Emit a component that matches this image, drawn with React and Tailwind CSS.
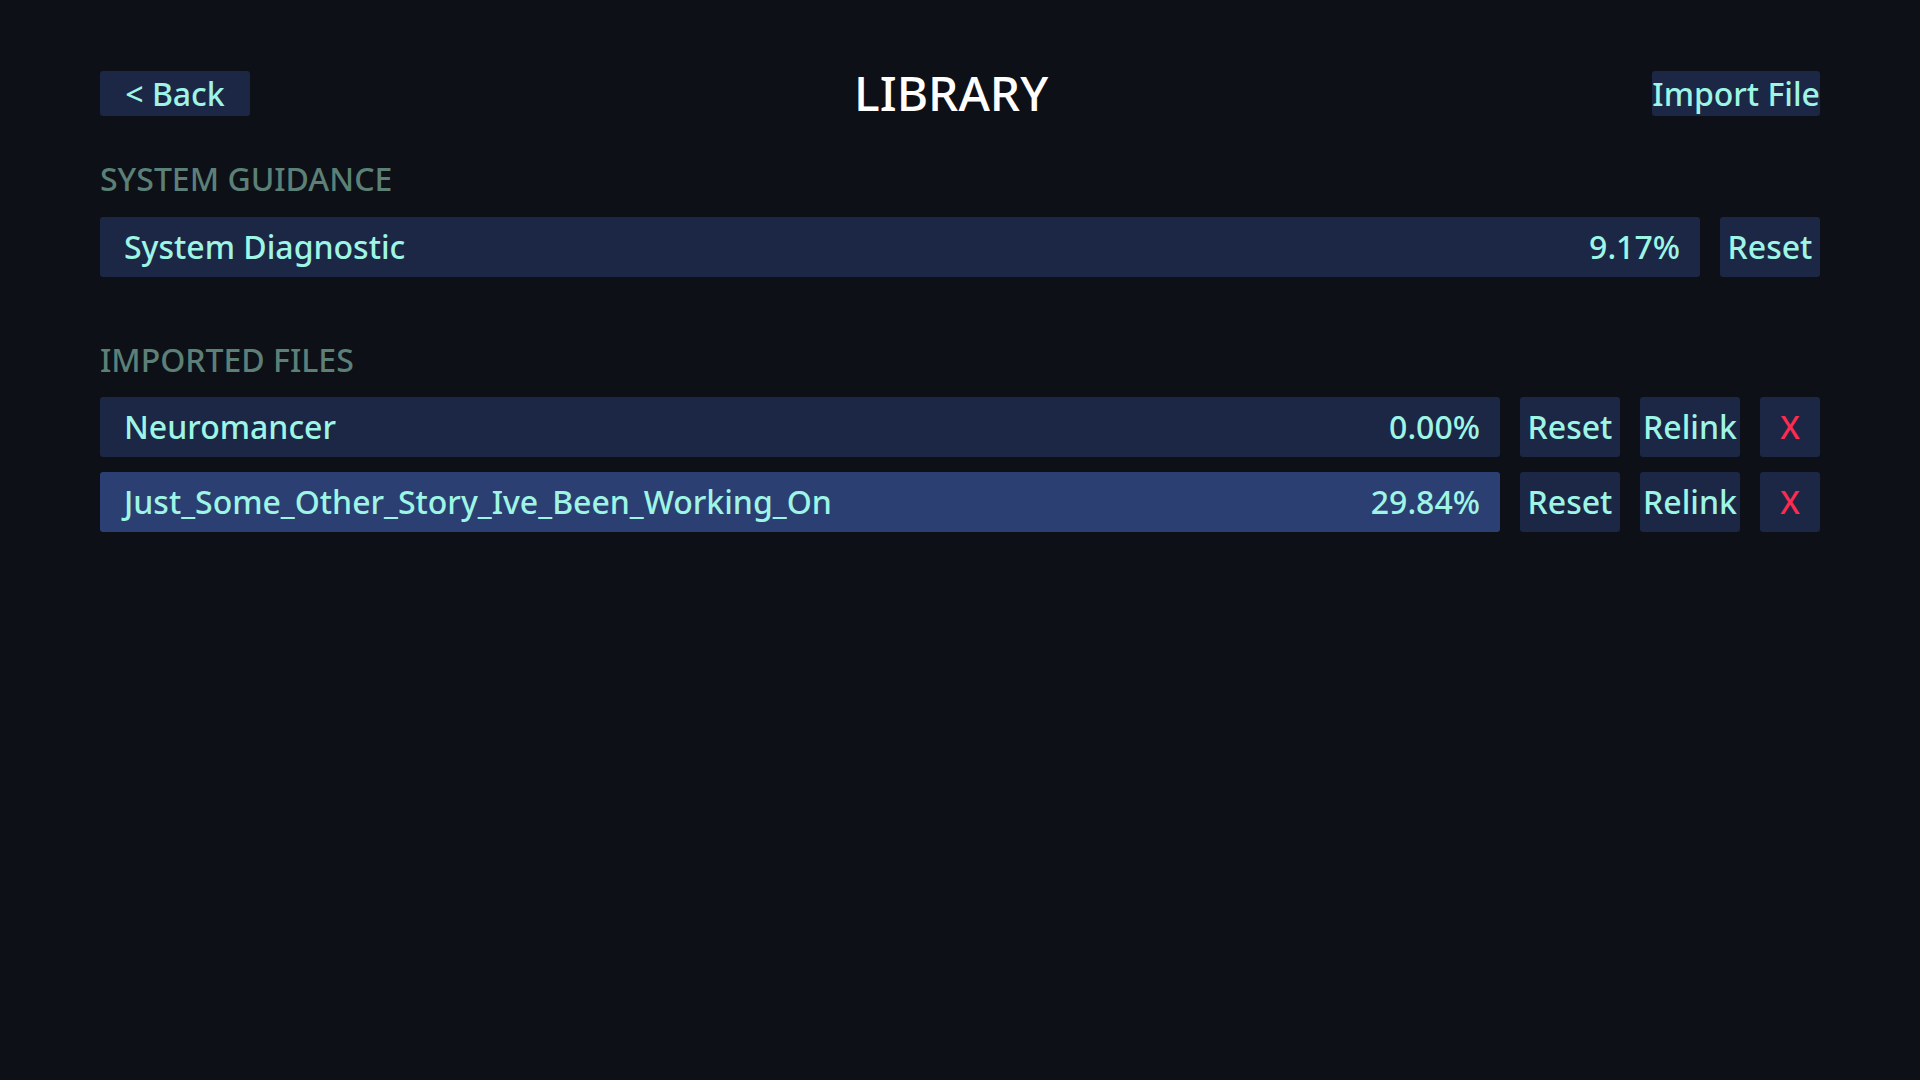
import React from 'react';

const files = [
  { name: 'Neuromancer', progress: '0.00%', active: false },
  { name: 'Just_Some_Other_Story_Ive_Been_Working_On', progress: '29.84%', active: true },
];

function SmallButton({ children, className = '' }) {
  return (
    <button
      className={`h-[60px] rounded-[3px] bg-[#1b2745] text-[#9ef5e5] flex items-center justify-center ${className}`}
    >
      {children}
    </button>
  );
}

function ProgressBar({ name, progress, active }) {
  return (
    <div
      className={`flex-1 min-w-0 h-[60px] rounded-[3px] flex items-center pl-6 pr-5 ${
        active ? 'bg-[#2b3f72]' : 'bg-[#1b2745]'
      }`}
    >
      <span className="whitespace-nowrap">{name}</span>
      <span className="ml-auto pl-4">{progress}</span>
    </div>
  );
}

function SectionLabel({ children, className = '' }) {
  return (
    <h2 className={`h-[34px] flex items-center text-[32px] text-[#5c8077] font-medium ${className}`}>{children}</h2>
  );
}

export default function App() {
  return (
    <div
      className="w-full min-h-screen bg-[#0d1016] text-[#9ef5e5] text-[32px] leading-[1.3] font-medium px-[100px] pt-[71px]"
      style={{ fontFamily: '"Noto Sans", "Open Sans", sans-serif' }}
    >
      {/* header */}
      <div className="flex items-center h-[45px]">
        <button className="w-[150px] h-[45px] rounded-[3px] bg-[#1b2745] text-[#9ef5e5] flex items-center justify-center">
          &lt; Back
        </button>
        <h1 className="flex-1 text-center text-[48px] text-white font-medium">LIBRARY</h1>
        <button className="h-[45px] rounded-[3px] bg-[#1b2745] text-[#9ef5e5] flex items-center">
          Import File
        </button>
      </div>

      <SectionLabel className="mt-[46px]">SYSTEM GUIDANCE</SectionLabel>
      <div className="flex gap-5 mt-[21px]">
        <ProgressBar name="System Diagnostic" progress="9.17%" />
        <SmallButton className="w-[100px]">Reset</SmallButton>
      </div>

      <SectionLabel className="mt-[66px]">IMPORTED FILES</SectionLabel>
      <div className="flex flex-col gap-[15px] mt-5">
        {files.map((f) => (
          <div key={f.name} className="flex gap-5">
            <ProgressBar name={f.name} progress={f.progress} active={f.active} />
            <SmallButton className="w-[100px]">Reset</SmallButton>
            <SmallButton className="w-[100px]">Relink</SmallButton>
            <SmallButton className="w-[60px] text-[#ff2a4f]">X</SmallButton>
          </div>
        ))}
      </div>
    </div>
  );
}
